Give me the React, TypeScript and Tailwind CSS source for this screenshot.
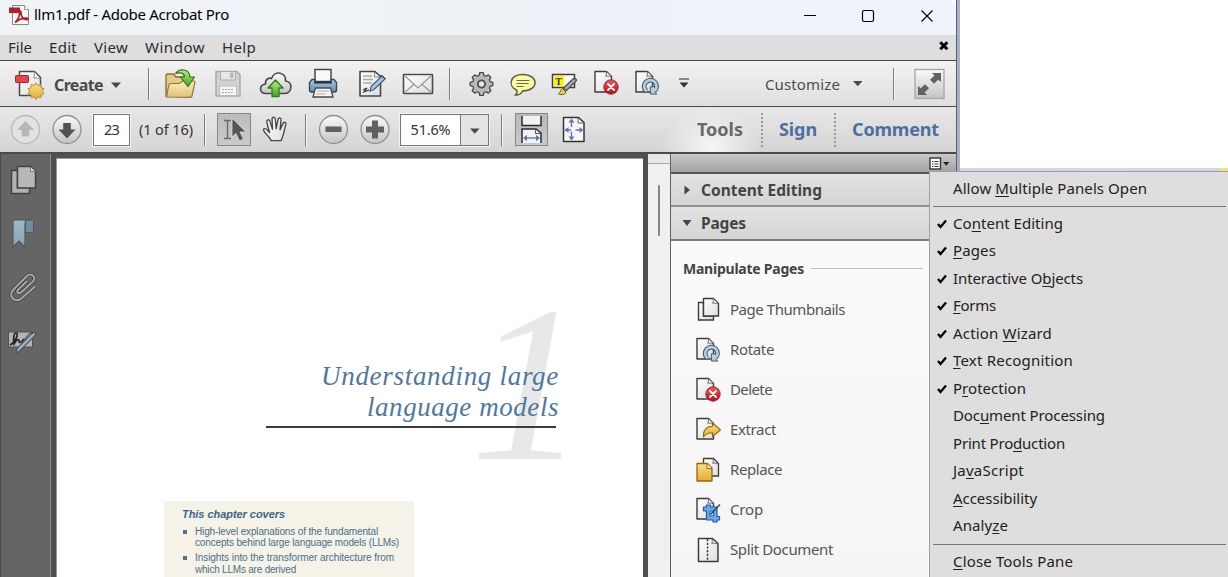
import { useLayoutEffect, useRef, type ReactNode } from "react";

const UI = "font-['Noto_Sans','Open_Sans',sans-serif]";

/** Single-line text whose letter spacing is adjusted to fill an exact width. */
function Fit({ w, className = "", children }: { w: number; className?: string; children: ReactNode }) {
  const ref = useRef<HTMLSpanElement>(null);
  useLayoutEffect(() => {
    const el = ref.current;
    if (!el) return;
    const apply = () => {
      el.style.letterSpacing = "0px";
      const n = (el.textContent ?? "").length;
      el.style.letterSpacing = `${(w - el.getBoundingClientRect().width) / n}px`;
    };
    apply();
    document.fonts?.ready.then(apply);
  }, [w]);
  return (
    <span ref={ref} className={`inline-block shrink-0 whitespace-nowrap ${className}`}>
      {children}
    </span>
  );
}

function Art({ box, className = "", children }: { box: [number, number, number, number]; className?: string; children: ReactNode }) {
  return (
    <svg viewBox={box.join(" ")} width={box[2]} height={box[3]} className={`block shrink-0 ${className}`} fill="none">
      {children}
    </svg>
  );
}

const Bar = ({ className = "" }: { className?: string }) => (
  <div className={`w-0.5 shrink-0 border-l border-[#7c7c7c] bg-[#f6f6f6] ${className}`} />
);

function Gradients() {
  return (
    <svg className="absolute h-0 w-0" aria-hidden="true">
      <defs>
        <linearGradient id="folder" x1="0" y1="0" x2="0" y2="1"><stop stopColor="#fdeebc" /><stop offset="1" stopColor="#e0c179" /></linearGradient>
        <linearGradient id="green" x1="0" y1="0" x2="0" y2="1"><stop stopColor="#b5ec87" /><stop offset="1" stopColor="#48a51f" /></linearGradient>
        <linearGradient id="paper" x1="0" y1="0" x2="1" y2="1"><stop stopColor="#ffffff" /><stop offset="1" stopColor="#dedede" /></linearGradient>
        <linearGradient id="grey" x1="0" y1="0" x2="0" y2="1"><stop stopColor="#fafafa" /><stop offset="1" stopColor="#c4c4c4" /></linearGradient>
        <linearGradient id="gold" x1="0" y1="0" x2="0" y2="1"><stop stopColor="#fbe08c" /><stop offset="1" stopColor="#e2ac2c" /></linearGradient>
        <linearGradient id="red" x1="0" y1="0" x2="0" y2="1"><stop stopColor="#ee5a5e" /><stop offset="1" stopColor="#b80d16" /></linearGradient>
        <linearGradient id="blue" x1="0" y1="0" x2="0" y2="1"><stop stopColor="#abcbe4" /><stop offset="1" stopColor="#5f8cb2" /></linearGradient>
        <linearGradient id="ribbon" x1="0" y1="0" x2="0" y2="1"><stop stopColor="#a2b7c2" /><stop offset="1" stopColor="#8ba4b1" /></linearGradient>
      </defs>
    </svg>
  );
}

/* Page sheet used as the base of several 24px icons. */
const Sheet = () => (
  <>
    <path d="M1 1.500h11.500l5 5V22H1z" fill="url(#paper)" stroke="#3c3c3c" strokeWidth="1.4" strokeLinejoin="round" />
    <path d="M12 1.500c.8 2 .6 3.600-.3 4.800 2.200-.5 4-.3 5.600.5" fill="#fff" stroke="#6c6c6c" strokeWidth="1" />
  </>
);

const DeleteIcon = () => (
  <Art box={[0, 0, 25, 26]}>
    <Sheet />
    <circle cx="17" cy="17" r="7.200" fill="url(#red)" stroke="#a31a1f" strokeWidth=".9" />
    <path d="m14 14 6 6m0-6-6 6" stroke="#fff" strokeWidth="1.8" strokeLinecap="round" />
  </Art>
);

const RotateIcon = () => (
  <Art box={[0, 0, 25, 26]}>
    <Sheet />
    <path d="M11.500 21.300a6.200 6.200 0 1 1 8.300-.6" stroke="#43596b" strokeWidth="4.800" />
    <path d="M15.300 16.800v7.200h6.500l-1.900-1.800 2-2-3-3.400z" fill="#b4cfe5" stroke="#43596b" strokeWidth="1" />
    <path d="M11.500 21.200a6.200 6.200 0 1 1 8.200-.4" stroke="#b4cfe5" strokeWidth="2.700" />
  </Art>
);

const ThumbsIcon = () => (
  <Art box={[0, 0, 25, 26]}>
    <path d="M2.500 5.500h5v13.500h10V23h-15z" fill="url(#paper)" stroke="#3c3c3c" strokeWidth="1.400" />
    <path d="M7.500 1.500h10l5 5V19h-15z" fill="url(#paper)" stroke="#3c3c3c" strokeWidth="1.400" strokeLinejoin="round" />
    <path d="M17 1.500c.5 2.500.4 3.500-.4 4.700 2.200-.3 4 0 5.600.8" fill="#fff" stroke="#6c6c6c" />
  </Art>
);

const ExtractIcon = () => (
  <Art box={[0, 0, 25, 26]}>
    <Sheet />
    <path d="M7.500 20C6.800 13 10.500 9.500 16.500 9.300V6l8 7-8 6.500v-3.800c-4-.1-6.500 1-9 4.300z" fill="url(#gold)" stroke="#9b6412" strokeWidth="1.100" strokeLinejoin="round" />
  </Art>
);

const ReplaceIcon = () => (
  <Art box={[0, 0, 25, 26]}>
    <path d="M7.500 1.500h10l5 5V19h-15z" fill="url(#paper)" stroke="#3c3c3c" strokeWidth="1.300" />
    <path d="M17 1.500c.5 2.500.4 3.500-.4 4.700 2.200-.3 4 0 5.600.8" stroke="#6c6c6c" />
    <path d="M1 6.500h10.500l4.500 4.500v13H1z" fill="url(#gold)" stroke="#9b6412" strokeWidth="1.300" strokeLinejoin="round" />
    <path d="M11 6.500v5h5" fill="#fff0b4" stroke="#9b6412" />
  </Art>
);

const CropIcon = () => (
  <Art box={[0, 0, 25, 26]}>
    <Sheet />
    <path d="M7.500 10h3V8h4v2h6.500v9.500h2.500v3.500h-2.500v2h-4v-2h-6.500v-9h-3z" fill="#68a9ec" stroke="#1d5da8" strokeWidth="1.200" strokeLinejoin="round" />
    <path d="M14 14h3.500v5H14z" fill="#e5eefa" stroke="#1d5da8" />
    <path d="m14.500 17.500 9.500-10" stroke="#2f3b4d" strokeWidth="1.300" />
  </Art>
);

const SplitIcon = () => (
  <Art box={[0, 0, 25, 26]}>
    <path d="M2.500 1.500h14l5.500 5V24.500H2.500z" fill="url(#paper)" stroke="#3c3c3c" strokeWidth="1.500" strokeLinejoin="round" />
    <path d="M16 1.500c.6 2.300.4 3.500-.4 4.800 2-.3 4 0 6 .8" stroke="#6c6c6c" />
    <path d="M11.500 2v22" stroke="#333" strokeWidth="1.400" strokeDasharray="2.200 1.500" />
  </Art>
);

function TitleBar() {
  return (
    <div className="flex h-[35px] shrink-0 items-center rounded-tr-lg bg-gradient-to-r from-[#f1f4f7] via-[#eef2f7] to-[#eff3fb] text-black">
      <Art box={[8, 0, 22, 35]} className="ml-2">
        <path d="M12.500 5.500h12l4 4v15h-16z" fill="#fafafa" stroke="#8c8585" />
        <path d="M24.500 5.500v4h4" fill="#fff" stroke="#999" />
        <path d="M9 7.500h11v5.500H9z" fill="#b51d25" />
        <path d="M15 22.500c2-1.500 5-6 4.700-10.500 0-1.400 1.500-1.200 1.300.4-.4 4 2.500 7.500 6 7.300 1.400-.1 1.400-1.500 0-1.600-4.500-.3-8.500 1.300-12 4.400z" stroke="#b51d25" strokeWidth="1.700" />
      </Art>
      <Fit w={195} className={`ml-1 -mt-1 mb-1 text-[15px] leading-5 ${UI}`}>llm1.pdf - Adobe Acrobat Pro</Fit>
      <Art box={[800, 0, 140, 35]} className="ml-auto mr-4">
        <path d="M804 15.500h12" stroke="#000" />
        <rect x="862.500" y="10.500" width="11" height="11" rx="1.500" stroke="#000" strokeWidth="1.200" />
        <path d="m921.500 10.500 11 11m0-11-11 11" stroke="#000" strokeWidth="1.100" />
      </Art>
    </div>
  );
}

function MenuBar() {
  return (
    <div className={`flex h-[25px] shrink-0 items-center bg-[#dedede] pb-0.5 pl-2 text-[15px] leading-5 text-[#2d2d2d] ${UI}`}>
      <Fit w={24}>File</Fit>
      <Fit w={28} className="ml-[17px]">Edit</Fit>
      <Fit w={34} className="ml-[17px]">View</Fit>
      <Fit w={60} className="ml-[17px]">Window</Fit>
      <Fit w={34} className="ml-[17px]">Help</Fit>
      <Art box={[938, 36, 12, 23]} className="ml-auto mr-1.5">
        <path d="m940.300 43.300 7 7m0-7-7 7" stroke="#000" strokeWidth="3" />
      </Art>
    </div>
  );
}

function MainToolbar() {
  return (
    <div className="flex h-[47px] shrink-0 items-center border-y border-[#454545] bg-gradient-to-b from-[#f2f2f2] to-[#dfdfdf] pl-3.5">
      <Art box={[14, 61, 32, 45]}>
        <path d="M19.500 71.500h15l6 6v18h-21z" fill="url(#paper)" stroke="#4a4a4a" strokeWidth="1.500" strokeLinejoin="round" />
        <path d="M34 71.500c.8 2.800.5 4.800-.5 6.500 2.500-.5 5 0 7 1.500" fill="#fff" stroke="#888" />
        <rect x="15.500" y="75.500" width="13" height="7" rx=".8" fill="#e8454e" stroke="#b81d2a" />
        <path d="m36 84.500 1.900 2.500 3-.9.100 3.100 3 1-1.800 2.500 1.800 2.500-3 1-.1 3-3-.9L36 101l-1.900-2.700-3 .9-.1-3-3-1 1.800-2.500-1.800-2.500 3-1 .1-3.100 3 .9z" fill="url(#gold)" stroke="#b88935" transform="translate(0 -1.500)" />
      </Art>
      <Fit w={49} className={`ml-2 mt-0.5 text-[16px] font-bold leading-5 text-[#4a4a4a] ${UI}`}>Create</Fit>
      <Art box={[103, 61, 20, 45]}><path d="M111 82.500h10l-5 5.500z" fill="#4a4a4a" /></Art>
      <Bar className="ml-[25px] h-8" />
      <Art box={[162, 61, 36, 45]} className="ml-3">
        <path d="M166 96V75.500q0-1.500 1.500-1.500h6l2.500 3h12v6h3l-2.500 13z" fill="#e3cb88" stroke="#856c32" strokeWidth="1.300" />
        <path d="M166.500 97q1.500-9 2.500-12 .3-1.500 1.700-1.500h8.300l4-2.500h10.500q1.500 0 1.300 1.500L192 96q-.3 1.300-1.600 1.300z" fill="url(#folder)" stroke="#8e733a" strokeWidth="1.200" />
        <path d="M175.500 73.500c4-5.500 14-5 14.500 3.500h4.500l-6.500 9.500-7.500-9.500h4c-.3-4-4-5-9-3.500z" fill="url(#green)" stroke="#2c7918" strokeWidth="1.200" strokeLinejoin="round" />
      </Art>
      <Art box={[212, 61, 32, 45]} className="ml-3.5">
        <path d="M216 71.500h21l3 3V96h-24z" fill="#d2d2d2" stroke="#aaa" strokeWidth="1.500" />
        <path d="M220.500 72v8h15v-8" fill="#e8e8e8" stroke="#aaa" /><path d="M230 72.500h3.500v5.500H230z" fill="#bbb" />
        <path d="M219.500 86h17v9.500h-17z" fill="#f5f5f5" stroke="#bbb" /><path d="M222 89.500h12m-12 3h12" stroke="#aaa" strokeDasharray="2 1" />
      </Art>
      <Art box={[258, 61, 36, 45]} className="ml-3.5">
        <path d="M266 93.500c-7 0-7.500-8.500-.5-9.500-.5-5 3.500-6.500 6-5.500 3-8.500 15-6.500 14 2.500 7.500.5 7 12-.5 12.500z" fill="url(#grey)" stroke="#4b4b4b" strokeWidth="1.600" />
        <path d="m275.500 80 7.500 8h-4v8.500h-7V88H268z" fill="url(#green)" stroke="#2c8018" strokeWidth="1.300" strokeLinejoin="round" />
      </Art>
      <Art box={[306, 61, 34, 45]} className="ml-3">
        <path d="M315 81V69.500h16V81" fill="#fafafa" stroke="#4a4a4a" strokeWidth="1.500" />
        <path d="M312 79.500h3v2h16v-2h3l2.500 3V90q0 2-2 2h-23q-2 0-2-2v-7.500z" fill="url(#blue)" stroke="#3b4956" strokeWidth="1.400" />
        <path d="M314 82.500h18" stroke="#273039" strokeWidth="2" />
        <path d="m315.500 88h15l2.500 9h-20z" fill="#f4f4f4" stroke="#4a4a4a" strokeWidth="1.300" /><path d="M317 91h12m-12.500 3h9" stroke="#aaa" />
      </Art>
      <Art box={[356, 61, 32, 45]} className="ml-4">
        <path d="M360 71.500h15l5.500 5V96H360z" fill="url(#paper)" stroke="#454545" strokeWidth="1.600" strokeLinejoin="round" />
        <path d="M374.500 72v5h5.500" stroke="#888" /><path d="M363 76h9m-9 3.500h10m-10 3.500h9" stroke="#a9a9a9" strokeWidth="1.500" />
        <path d="m363 90 4-2-3 4 5-2" stroke="#333" strokeWidth="1.200" />
        <path d="m370 91 1-4.500 11-10.500 3 3L374 89.500z" fill="#a9c8df" stroke="#415d73" strokeWidth="1.200" /><path d="m380 76.500 1.500-1.500 4 4" stroke="#333" />
      </Art>
      <Art box={[400, 61, 36, 45]} className="ml-3">
        <rect x="403.500" y="74.500" width="29" height="19" rx=".5" fill="url(#paper)" stroke="#4c4c4c" strokeWidth="1.600" />
        <path d="m405 76 13 12 13-12M405 92l9.500-8m16.500 8-9.500-8" stroke="#999" strokeWidth="1.200" />
      </Art>
      <Bar className="ml-[13px] h-8" />
      <Art box={[466, 61, 32, 45]} className="ml-[15px]">
        <g transform="translate(481.500 84) scale(.92) translate(-481.500 -85.250)">
          <path d="M479.500 73h4l.7 3 2 .9 2.700-1.600 2.800 2.800-1.600 2.700.8 2 2.900.7v3.500l-2.900.8-.8 2 1.600 2.700-2.800 2.700-2.700-1.500-2 .8-.7 3h-4l-.7-3-2-.8-2.700 1.500-2.700-2.700 1.600-2.700-.9-2-2.900-.8v-3.500l2.900-.7.900-2-1.600-2.700 2.700-2.800 2.700 1.600 2-.9z" fill="#b9b9b9" stroke="#484848" strokeWidth="1.400" strokeLinejoin="round" />
        </g>
        <circle cx="481.500" cy="84" r="3.600" fill="#e4e4e4" stroke="#4f4f4f" strokeWidth="1.900" />
      </Art>
      <Art box={[508, 61, 32, 45]} className="ml-2.5">
        <path d="M522.500 74.500c17 0 16.500 16.500 0 16.500-.8 2-3.500 4-7 4 2-2 2-3.500 1-5-9-4-6.500-15.500 6-15.500z" fill="#fcfaa2" stroke="#5b5b45" strokeWidth="1.400" />
        <path d="M516.500 80.500h13m-13 3h12m-12 3h7" stroke="#6b6b4c" strokeWidth="1.100" />
      </Art>
      <Art box={[548, 61, 34, 45]} className="ml-2">
        <path d="M552.500 74.500h22v13h-22z" fill="#fafafa" stroke="#3e3e3e" strokeWidth="1.500" /><path d="M554 76h10v10h-10z" fill="#fff300" />
        <text x="555.300" y="85" fontSize="10" fontWeight="700" fontFamily="Liberation Serif" fill="#333">T</text>
        <path d="m563 88.500 10-9.500q3-1.500 3.500 1.500l-10 10z" fill="#aaa" stroke="#4c4c4c" strokeWidth="1.300" />
        <path d="M562.500 88.500 566 92c-1 3-4 3-7.500 2 2-1.500 2-4.500 4-5.500z" fill="#e4d445" stroke="#716316" />
      </Art>
      <div className="ml-3 pb-0.5"><DeleteIcon /></div>
      <div className="ml-4 pb-0.5"><RotateIcon /></div>
      <Art box={[676, 61, 16, 45]} className="ml-4">
        <path d="M679 79h10" stroke="#555" strokeWidth="1.300" /><path d="M679.500 82.500h9l-4.500 5z" fill="#333" />
      </Art>
      <Fit w={75} className={`ml-[73px] text-[15px] leading-5 text-[#4b4b4b] ${UI}`}>Customize</Fit>
      <Art box={[840, 61, 24, 45]}><path d="M853 81h9.500l-4.700 5.200z" fill="#4a4a4a" /></Art>
      <Bar className="ml-[29px] h-8" />
      <Art box={[912, 61, 36, 45]} className="ml-[17px]">
        <rect x="915" y="69.500" width="29" height="29" fill="url(#grey)" stroke="#a6a6a6" strokeWidth="1.300" />
        <path d="M932 73h9v9l-2.800-2.300-4.200 4-4-4 4.500-4.200zM927 95h-9v-9l2.800 2.300 4.200-4 4 4-4.500 4.200z" fill="#626262" />
      </Art>
    </div>
  );
}

function NavToolbar() {
  return (
    <div className={`flex h-[47px] shrink-0 items-center border-b-2 border-[#4b4b4b] bg-gradient-to-b from-[#e8e8e8] to-[#d4d4d4] text-[#333] ${UI}`}>
      <Art box={[8, 107, 78, 46]} className="ml-2">
        <circle cx="25.500" cy="129.500" r="14" fill="#e2e2e2" stroke="#b9b9b9" strokeWidth="1.300" />
        <path d="m25.500 121 8.500 9h-4.700v6.500h-7.600V130H17z" fill="#b6b6b6" />
        <circle cx="67" cy="129.500" r="14" fill="url(#grey)" stroke="#909090" strokeWidth="1.300" />
        <path d="m67 138.500-8.500-9h4.700V123h7.600v6.500h4.700z" fill="#525252" />
      </Art>
      <div className="ml-[7px] flex h-8 w-[37px] shrink-0 items-center justify-center border border-[#777] bg-white pb-0.5 text-[14.500px] leading-5 ring-1 ring-[#f4f4f4]"><Fit w={15}>23</Fit></div>
      <Fit w={54} className="mb-0.5 ml-[9px] text-[14.500px] leading-5">(1 of 16)</Fit>
      <Bar className="ml-[11px] h-8" />
      <div className="ml-[11px] h-[33px] w-[34px] shrink-0 border border-[#888] bg-gradient-to-b from-[#bcbcbc] to-[#c9c9c9]">
        <Art box={[218, 114, 31, 31]}>
          <path d="M224 120.500h2.500l1 1 1-1h2.500M227.500 121v17m-3.500.500h2.500l1-1 1 1h2.500" stroke="#676767" strokeWidth="1.300" />
          <path d="M232 118v19l4-3.500 3.500 7.500 4-2-3.500-7h6z" fill="#555" stroke="#dcdcdc" strokeWidth=".8" />
        </Art>
      </div>
      <Art box={[260, 107, 32, 46]} className="ml-[9px]">
        <path d="M271 140.500c-1-3.500-6-6.500-7.300-10-.8-2.500 2-2.500 3.800-.3l2 2.300-2.700-10.500c-.5-2.500 2.300-3 3.100-.8l2.600 8-.4-10c0-2.600 3-2.600 3.200 0l.9 9.500 1.900-9.300c.5-2.200 3-1.700 2.900.5l-1 10 3-6.500c1-2 3.500-1.200 2.800 1-1.500 5-2 11-4.800 16.200z" fill="url(#paper)" stroke="#4a4a4a" strokeWidth="1.400" strokeLinejoin="round" />
      </Art>
      <Bar className="ml-[13px] h-8" />
      <Art box={[318, 107, 74, 46]} className="ml-[11px]">
        <circle cx="333.500" cy="129.500" r="14" fill="url(#grey)" stroke="#909090" strokeWidth="1.300" />
        <rect x="325.500" y="126.500" width="16" height="5.500" fill="#606060" />
        <circle cx="375" cy="129.500" r="14" fill="url(#grey)" stroke="#909090" strokeWidth="1.300" />
        <path d="M372 120.500h6v6h6v6h-6v6h-6v-6h-6v-6h6z" fill="#606060" />
      </Art>
      <div className="ml-2 flex h-8 w-[89px] shrink-0 border border-[#777] bg-white ring-1 ring-[#f4f4f4]">
        <div className="flex w-[60px] items-center justify-center border-r border-[#777] pb-0.5 text-[14.500px] leading-5"><Fit w={40}>51.6%</Fit></div>
        <Art box={[461, 114, 27, 30]} className="bg-[#e4e4e4]"><path d="M470 127.500h9.500l-4.700 5.200z" fill="#4a4a4a" /></Art>
      </div>
      <Bar className="ml-3 h-8" />
      <div className="ml-3 h-[33px] w-[33px] shrink-0 border border-[#888] bg-gradient-to-b from-[#b9b9b9] to-[#c9c9c9]">
        <Art box={[516, 114, 31, 31]}>
          <path d="M522 116v9.500h19V116M522 143v-14h14l5 4v10" fill="#f2f2f2" stroke="#2c2c2c" strokeWidth="1.500" />
          <path d="M535.500 129v4.500h5" stroke="#555" />
          <path d="M524.500 138h14" stroke="#6f86bb" strokeWidth="1.500" /><path d="m523 138 4-3.200v6.400zm17 0-4-3.200v6.400z" fill="#5f78b2" />
        </Art>
      </div>
      <Art box={[560, 107, 28, 46]} className="ml-3">
        <path d="M563.500 117.500h15l5.500 5v19h-20.500z" fill="#f6f6f6" stroke="#333" strokeWidth="1.500" strokeLinejoin="round" /><path d="M578 118v5h6" stroke="#666" />
        <path d="M571.500 121v17M565 130h18" stroke="#6079b0" strokeWidth="1.400" strokeDasharray="6 4.500 6" />
        <path d="m571.500 118.500 3 4h-6zm0 22 3-4h-6zM564.500 130l4-3v6zm19 0-4-3v6z" fill="#5f78b2" />
      </Art>
      <div className="ml-[72px] flex h-[45px] w-[101px] shrink-0 items-center bg-[radial-gradient(ellipse_at_50%_90%,#f6f6f6_0%,transparent_70%)] pb-0.5 pl-[37px]">
        <Fit w={46} className="text-[18px] font-bold leading-6 text-[#696969]">Tools</Fit>
      </div>
      <div className="h-[34px] w-0 shrink-0 border-l-2 border-dotted border-[#9a9a9a]" />
      <Fit w={38} className="mb-0.5 ml-4 text-[18px] font-bold leading-6 text-[#4e6f9e]">Sign</Fit>
      <div className="ml-[17px] h-[34px] w-0 shrink-0 border-l-2 border-dotted border-[#9a9a9a]" />
      <Fit w={87} className="mb-0.5 ml-4 text-[18px] font-bold leading-6 text-[#4e6f9e]">Comment</Fit>
    </div>
  );
}

function Rail() {
  return (
    <div className="flex w-[51px] shrink-0 justify-between border-l border-[#4a4a4a] bg-[#656565]">
      <Art box={[1, 154, 48, 210]}>
        <path d="M11.500 170.500h6v17h12v6h-18z" fill="#b2b2b2" stroke="#424242" strokeWidth="1.500" />
        <path d="M17.500 166.500h13l5 4.500v17h-18z" fill="#b8b8b8" stroke="#424242" strokeWidth="1.500" /><path d="M30.500 167v4.500h5" fill="#ddd" stroke="#777" />
        <path d="M25 220h7.500q1 0 1 1.500v11h-8z" fill="#708c9d" stroke="#4a5962" />
        <path d="M14 220h12.500q-1.500 1.500-1.500 5v22l-6-6-6 6v-25q0-2 1-2z" fill="url(#ribbon)" stroke="#4a5962" strokeWidth="1.200" />
        <g transform="translate(10 273)"><path d="M25 13.500 12 25c-3 2.500-6.500 3-9 .8-3-2.500-2.200-6.500.5-9.300L17 3c2-1.800 4.500-1.800 6.200-.2 1.600 1.700 1.300 4-.4 5.800L11 19.500c-2.700 2-5-.4-3-2.700L17 8" stroke="#3f3f3f" strokeWidth="3.300" /><path d="M25 13.500 12 25c-3 2.500-6.500 3-9 .8-3-2.500-2.200-6.500.5-9.300L17 3c2-1.800 4.500-1.800 6.200-.2 1.600 1.700 1.300 4-.4 5.800L11 19.500c-2.700 2-5-.4-3-2.700L17 8" stroke="#a9a9a9" strokeWidth="1.900" /></g>
        <path d="M8.500 332h24v15h-24z" fill="#b3b3b3" stroke="#505050" />
        <path d="M10 345c6-3 9-12 6-12-2.500 0-3 8-2 11 2-4 5-6 5-3s3 1 5-2" stroke="#252525" strokeWidth="1.700" />
        <path d="m16 353 1.500-5 15-15 3.500-1-1.500 4-15 15z" fill="#9db6c6" stroke="#49565e" strokeWidth="1.100" /><path d="m24 340 6-7q2-1 3 1" stroke="#333" />
      </Art>
      <div className="w-px bg-[#8e8e8e]" />
    </div>
  );
}

function Bullet({ children }: { children: ReactNode }) {
  return (
    <div className="mb-[3.500px] flex">
      <div className="ml-px mr-[8px] mt-[4px] size-[4px] shrink-0 bg-[#4a748f]" />
      <div className="flex flex-col items-start">{children}</div>
    </div>
  );
}

function Document() {
  return (
    <div className="flex w-[597px] shrink-0 bg-[#505050] px-[5px] pt-1">
      <div className="relative h-[419px] w-[587px] overflow-hidden border-l border-t border-[#999] bg-white">
        <div className="absolute left-[413px] top-[114px] origin-left scale-x-[1.050] font-['Liberation_Serif',serif] text-[222px] italic leading-[222px] text-[#e6e9e8]">1</div>
        <div className="relative flex flex-col items-end pr-[84px] pt-[202px] font-['Liberation_Serif',serif] text-[27px] italic leading-[31px] text-[#4f789e]">
          <Fit w={238}>Understanding large</Fit>
          <Fit w={192}>language models</Fit>
          <div className="mr-[3px] mt-[3px] h-[1.500px] w-[290px] bg-[#3f393c]" />
        </div>
        <div className="relative ml-[107px] mt-[73px] h-24 w-[250px] bg-[#f5f2e7] pl-[18px] pt-[7px] font-['Liberation_Sans',sans-serif] text-[10px] leading-[11.500px] text-[#4a708b]">
          <Fit w={103} className="mb-[5px] text-[11px] font-bold italic leading-[13px] text-[#3c6688]">This chapter covers</Fit>
          <Bullet>
            <Fit w={183}>High-level explanations of the fundamental</Fit>
            <Fit w={204}>concepts behind large language models (LLMs)</Fit>
          </Bullet>
          <Bullet>
            <Fit w={199}>Insights into the transformer architecture from</Fit>
            <Fit w={101}>which LLMs are derived</Fit>
          </Bullet>
        </div>
      </div>
    </div>
  );
}

function Scrollbar() {
  return (
    <div className="flex w-[22px] shrink-0 flex-col bg-[#f0f0f0]">
      <div className="h-[10px] border-b border-[#aaa] bg-[#e8e8e8]" />
      <div className="ml-[10px] mt-[21px] h-[51px] w-[2px] rounded-full bg-[#858585]" />
    </div>
  );
}

const tools: { label: string; w: number; icon: ReactNode }[] = [
  { label: "Page Thumbnails", w: 115, icon: <ThumbsIcon /> },
  { label: "Rotate", w: 44, icon: <RotateIcon /> },
  { label: "Delete", w: 42, icon: <DeleteIcon /> },
  { label: "Extract", w: 46, icon: <ExtractIcon /> },
  { label: "Replace", w: 52, icon: <ReplaceIcon /> },
  { label: "Crop", w: 33, icon: <CropIcon /> },
  { label: "Split Document", w: 103, icon: <SplitIcon /> },
];

function ToolsPane() {
  return (
    <div className={`flex min-w-0 flex-1 flex-col border-l border-[#606060] bg-gradient-to-b from-[#fcfcfc] to-[#f5f5f5] text-[#444] ${UI}`}>
      <div className="flex h-[20px] shrink-0 justify-end border-b-2 border-[#555] bg-gradient-to-b from-[#c9c9c9] to-[#a2a2a2]">
        <Art box={[928, 154, 24, 18]} className="mr-1">
          <rect x="930" y="158" width="10.500" height="11" fill="#fff" stroke="#333" strokeWidth="1.400" />
          <path d="M932 161.500h1.500m1 0h4m-6.500 2.500h1.500m1 0h4m-6.500 2.500h1.500m1 0h4" stroke="#333" /><path d="M943 162h6.500l-3.200 3.700z" fill="#222" />
        </Art>
      </div>
      <div className="flex h-[33px] shrink-0 items-center border-b-2 border-[#8f8f8f] bg-gradient-to-b from-[#e3e3e3] to-[#d4d4d4] pl-[13px]">
        <Art box={[0, 0, 17, 12]}><path d="M.5 1.500v9l5.500-4.500z" fill="#444" /></Art>
        <Fit w={121} className="text-[15.500px] font-bold leading-5">Content Editing</Fit>
      </div>
      <div className="flex h-[34px] shrink-0 items-center border-b-2 border-[#7c7c7c] bg-gradient-to-b from-[#e3e3e3] to-[#d4d4d4] pl-[11px]">
        <Art box={[0, 0, 19, 12]}><path d="M.5 3h9L5 9z" fill="#444" /></Art>
        <Fit w={45} className="text-[15.500px] font-bold leading-5">Pages</Fit>
      </div>
      <div className="mt-[18px] flex h-5 shrink-0 items-center pl-[12px]">
        <Fit w={121} className="text-[14px] font-bold leading-5">Manipulate Pages</Fit>
        <div className="mb-px ml-[7px] h-px w-[112px] bg-[#bdbdbd]" />
      </div>
      <div className="mt-[11px] flex flex-col pl-[25px]">
        {tools.map((t) => (
          <div key={t.label} className="flex h-10 items-center">
            {t.icon}
            <Fit w={t.w} className="mb-0.5 ml-[9px] text-[15px] leading-5 text-[#555]">{t.label}</Fit>
          </div>
        ))}
      </div>
    </div>
  );
}

const panels: [string, string, string, number, boolean][] = [
  ["Co", "n", "tent Editing", 110, true],
  ["", "P", "ages", 43, true],
  ["Interactive O", "b", "jects", 130, true],
  ["", "F", "orms", 43, true],
  ["Action ", "W", "izard", 99, true],
  ["", "T", "ext Recognition", 120, true],
  ["P", "r", "otection", 73, true],
  ["Doc", "u", "ment Processing", 152, false],
  ["Print Pro", "d", "uction", 112, false],
  ["Ja", "v", "aScript", 71, false],
  ["", "A", "ccessibility", 84, false],
  ["Analy", "z", "e", 55, false],
];

const Key = ({ children }: { children: ReactNode }) => (
  <span className="underline decoration-1 underline-offset-2 [text-decoration-skip-ink:none]">{children}</span>
);

function PanelMenu() {
  return (
    <div className={`absolute left-[929px] top-[171px] flex h-[406px] w-[299px] flex-col overflow-hidden border-l border-t border-[#a0a0a0] bg-[#dedede] text-[15px] leading-5 text-[#222] ${UI}`}>
      <div className="flex h-[34px] shrink-0 items-center pb-0.5 pl-[23px]">
        <Fit w={194}>Allow <Key>M</Key>ultiple Panels Open</Fit>
      </div>
      <div className="ml-[3px] h-px w-[293px] shrink-0 bg-[#777]" />
      <div className="flex flex-col pt-[3px]">
        {panels.map(([a, k, b, w, on]) => (
          <div key={a + k + b} className="flex h-[27.500px] items-center">
            <div className="flex w-[23px] justify-end pr-1.5">
              {on && <Art box={[0, 0, 10, 10]}><path d="M1 5 3.500 8 9 1.500" stroke="#000" strokeWidth="2.300" /></Art>}
            </div>
            <Fit w={w} className="mb-0.5">{a}<Key>{k}</Key>{b}</Fit>
          </div>
        ))}
      </div>
      <div className="ml-[3px] mt-[4px] h-px w-[293px] shrink-0 bg-[#777]" />
      <div className="flex h-[33px] shrink-0 items-center pb-0.5 pl-[23px]">
        <Fit w={120}><Key>C</Key>lose Tools Pane</Fit>
      </div>
    </div>
  );
}

export default function App() {
  return (
    <div className="relative flex h-[577px] w-[1228px] overflow-hidden bg-white">
      <Gradients />
      <div className="flex w-[956px] shrink-0 flex-col">
        <TitleBar />
        <MenuBar />
        <MainToolbar />
        <NavToolbar />
        <div className="flex min-h-0 flex-1">
          <Rail />
          <Document />
          <Scrollbar />
          <ToolsPane />
        </div>
      </div>
      <div className="w-1 shrink-0 border-l border-[#5b5e68] bg-[#a9b1c6]" />
      <div className="mt-[168px] flex h-[3px] flex-1 self-start bg-gradient-to-r from-[#d5d9e6] to-[#cdd6e5]">
        <div className="ml-auto h-full w-2 bg-[#f5df82]" />
      </div>
      <PanelMenu />
    </div>
  );
}
